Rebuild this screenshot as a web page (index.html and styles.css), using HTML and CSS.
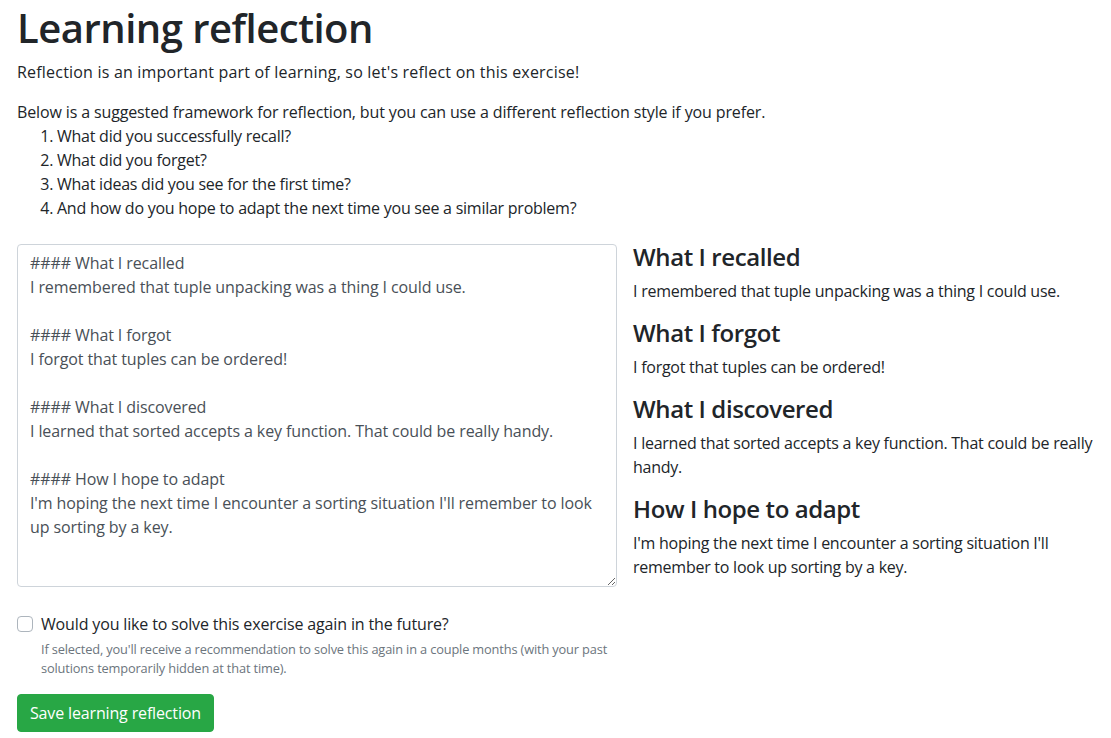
FILE: index.html
```html
<!DOCTYPE html>
<html lang="en">
<head>
<meta charset="utf-8">
<title>Learning reflection</title>
<link rel="stylesheet" href="styles.css">
</head>
<body>
<main class="page">
  <h1 class="title">Learning reflection</h1>
  <p class="intro">Reflection is an important part of learning, so let's reflect on this exercise!</p>
  <p class="lead-in">Below is a suggested framework for reflection, but you can use a different reflection style if you prefer.</p>
  <ol class="questions">
    <li>What did you successfully recall?</li>
    <li>What did you forget?</li>
    <li>What ideas did you see for the first time?</li>
    <li>And how do you hope to adapt the next time you see a similar problem?</li>
  </ol>

  <form class="reflection-form">
    <div class="columns">
      <div class="editor-col">
        <textarea class="editor" spellcheck="false">#### What I recalled
I remembered that tuple unpacking was a thing I could use.

#### What I forgot
I forgot that tuples can be ordered!

#### What I discovered
I learned that sorted accepts a key function. That could be really handy.

#### How I hope to adapt
I'm hoping the next time I encounter a sorting situation I'll remember to look up sorting by a key.</textarea>
      </div>
      <div class="preview-col">
        <h4 class="preview-heading">What I recalled</h4>
        <p class="preview-text">I remembered that tuple unpacking was a thing I could use.</p>
        <h4 class="preview-heading">What I forgot</h4>
        <p class="preview-text">I forgot that tuples can be ordered!</p>
        <h4 class="preview-heading">What I discovered</h4>
        <p class="preview-text">I learned that sorted accepts a key function. That could be really handy.</p>
        <h4 class="preview-heading">How I hope to adapt</h4>
        <p class="preview-text">I'm hoping the next time I encounter a sorting situation I'll remember to look up sorting by a key.</p>
      </div>
    </div>

    <div class="check-row">
      <input type="checkbox" id="again" class="check-input">
      <div class="check-body">
        <label for="again" class="check-label">Would you like to solve this exercise again in the future?</label>
        <small class="check-help">If selected, you'll receive a recommendation to solve this again in a couple months (with your past solutions temporarily hidden at that time).</small>
      </div>
    </div>

    <button type="button" class="save-btn">Save learning reflection</button>
  </form>
</main>
</body>
</html>
```
FILE: styles.css
```css
* { box-sizing: border-box; }

html, body {
  margin: 0;
  padding: 0;
  background: #ffffff;
}

body {
  font-family: "Open Sans", "Noto Sans", sans-serif;
  font-size: 16px;
  line-height: 24px;
  color: #212529;
}

.page {
  padding: 4px 8px 0 17px;
}

.title {
  margin: 0 0 8px 0;
  font-size: 40px;
  line-height: 48px;
  font-weight: 600;
  letter-spacing: -0.5px;
  color: #212529;
}

.intro {
  margin: 0 0 16px 0;
  letter-spacing: 0.2px;
}

.lead-in {
  margin: 0;
  letter-spacing: -0.13px;
}

.questions {
  margin: 0 0 24px 0;
  padding-left: 40px;
  letter-spacing: -0.25px;
}

.columns {
  display: grid;
  grid-template-columns: 600px 470px;
  column-gap: 16px;
  align-items: start;
}

.editor {
  display: block;
  width: 600px;
  height: 343px;
  margin: 0 0 25px 0;
  padding: 6px 12px;
  border: 1px solid #ced4da;
  border-radius: 4px;
  font-family: "Open Sans", "Noto Sans", sans-serif;
  font-size: 16px;
  line-height: 24px;
  letter-spacing: -0.1px;
  color: #495057;
  background: #ffffff;
  resize: vertical;
  overflow: hidden;
  outline: none;
}

.preview-col {
  margin-top: -1px;
}

.preview-heading {
  margin: 0 0 8px 0;
  font-size: 24px;
  line-height: 28px;
  font-weight: 600;
  letter-spacing: -0.4px;
  color: #212529;
}

.preview-text {
  margin: 0 0 16px 0;
  letter-spacing: -0.25px;
}

.check-row {
  display: flex;
  align-items: flex-start;
  gap: 8px;
  margin-bottom: 16px;
}

.check-input {
  appearance: none;
  -webkit-appearance: none;
  flex: 0 0 16px;
  width: 16px;
  height: 16px;
  margin: 4px 0 0 0;
  border: 1px solid #adb5bd;
  border-radius: 4px;
  background: #ffffff;
}

.check-body {
  display: flex;
  flex-direction: column;
}

.check-label {
  line-height: 24px;
  letter-spacing: -0.15px;
}

.check-help {
  display: block;
  width: 576px;
  margin-top: 4px;
  font-size: 12.8px;
  line-height: 19.2px;
  letter-spacing: -0.15px;
  color: #6c757d;
}

.save-btn {
  display: inline-block;
  height: 38px;
  padding: 6px 12px;
  border: 1px solid #28a745;
  border-radius: 4px;
  background: #28a745;
  color: #ffffff;
  font-family: "Open Sans", "Noto Sans", sans-serif;
  font-size: 16px;
  line-height: 24px;
  letter-spacing: -0.15px;
  cursor: pointer;
}
```
